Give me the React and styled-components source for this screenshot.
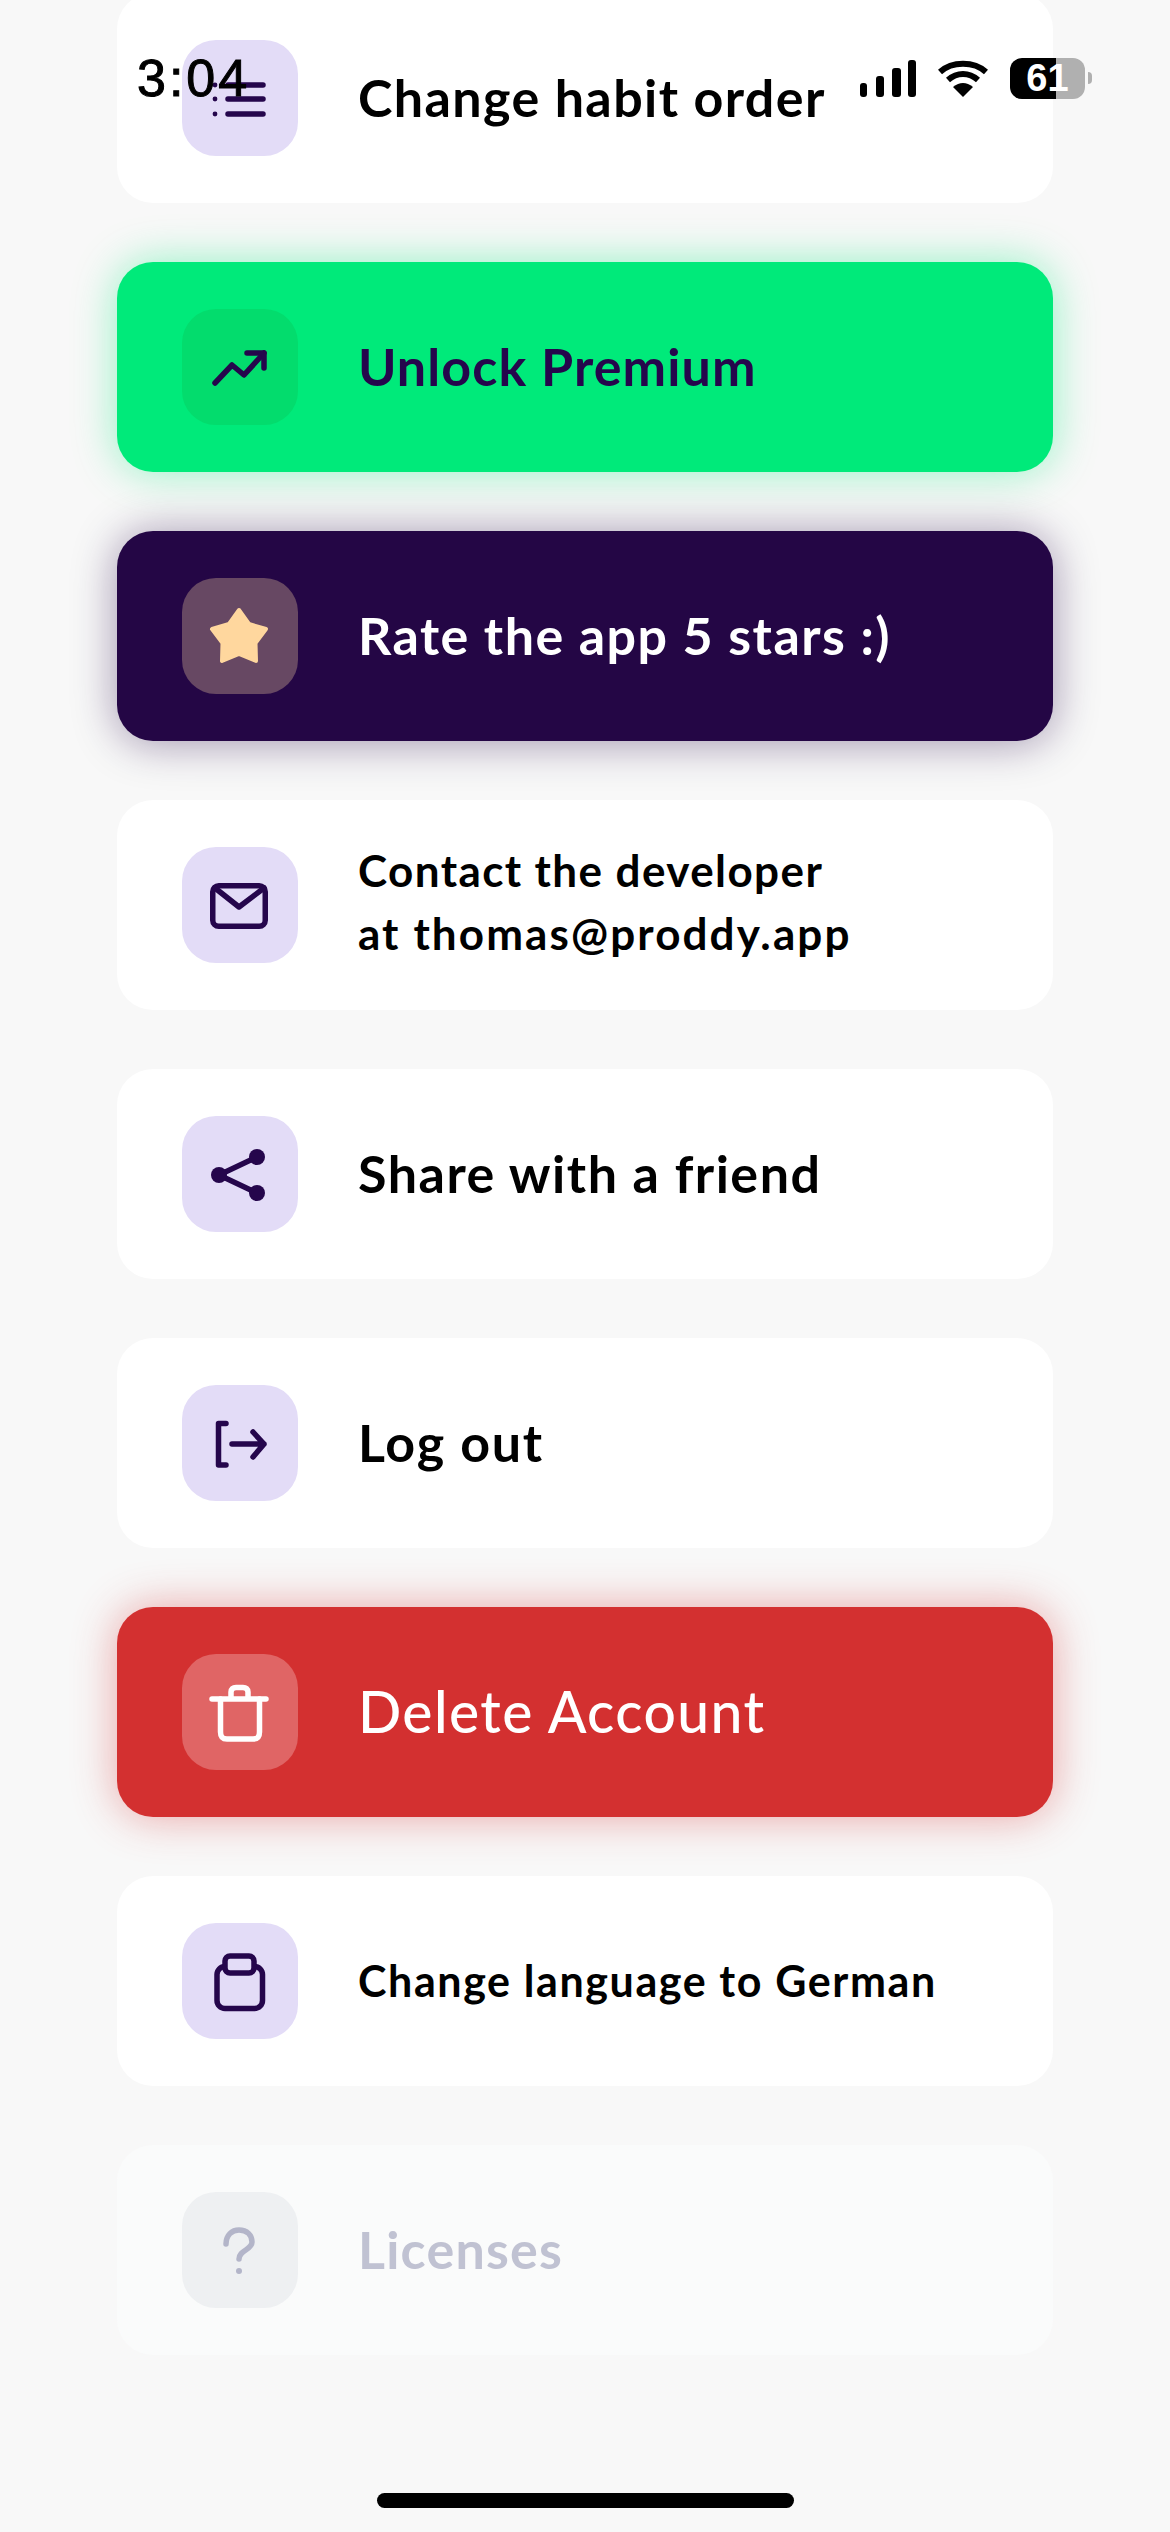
import React from 'react';
import styled, { createGlobalStyle } from 'styled-components';

const INK = '#25064c';

const GlobalStyle = createGlobalStyle`
  html, body {
    margin: 0;
    padding: 0;
    background: #f8f8f8;
  }
`;

const Screen = styled.div`
  position: relative;
  width: 1170px;
  height: 2532px;
  overflow: hidden;
  background: #f8f8f8;
  font-family: Lato, "Noto Sans", sans-serif;
`;

const List = styled.div`
  display: flex;
  flex-direction: column;
  gap: 59px;
  margin: -7px 117px 0;
`;

const variants = {
  plain: { bg: '#ffffff', text: '#000000', box: '#e3dcf7', shadow: 'none' },
  green: { bg: '#00ea7a', text: INK, box: '#03dc6d', shadow: '0 0 44px rgba(0, 234, 122, 0.42)' },
  dark: { bg: '#240645', text: '#ffffff', box: '#674863', shadow: '0 2px 44px rgba(36, 6, 69, 0.42)' },
  red: { bg: '#d33030', text: '#ffffff', box: '#e06565', shadow: '0 0 44px rgba(211, 48, 48, 0.42)' },
  muted: { bg: '#fafbfb', text: '#c0c2d2', box: '#eef0f2', shadow: 'none' },
};

const Card = styled.div`
  display: flex;
  align-items: center;
  gap: 60px;
  height: 210px;
  padding-left: 65px;
  border-radius: 36px;
  background: ${(p) => variants[p.$variant].bg};
  color: ${(p) => variants[p.$variant].text};
  box-shadow: ${(p) => variants[p.$variant].shadow};
`;

const IconBox = styled.div`
  flex: none;
  width: 116px;
  height: 116px;
  border-radius: 34px;
  background: ${(p) => variants[p.$variant].box};

  svg {
    display: block;
  }
`;

const Label = styled.div`
  font-size: ${(p) => p.$size || 52}px;
  font-weight: ${(p) => p.$weight || 700};
  line-height: 63px;
  letter-spacing: ${(p) => p.$spacing || 1.3}px;
  margin-bottom: ${(p) => p.$lift || 2}px;
`;

const LabelLine = styled.div`
  letter-spacing: ${(p) => p.$spacing}px;
`;

const StatusBar = styled.div`
  position: absolute;
  top: 53px;
  left: 137px;
  width: 955px;
  display: flex;
  align-items: center;
  color: #000;
  font-family: "Liberation Sans", Arial, sans-serif;
`;

const Time = styled.div`
  font-size: 52px;
  line-height: 50px;
  letter-spacing: 3px;
  margin-right: auto;
  -webkit-text-stroke: 1px #000;
`;

const StatusIcons = styled.div`
  display: flex;
  align-items: center;
  gap: 22px;
`;

const BatteryWrap = styled.div`
  display: flex;
  align-items: center;
  gap: 3px;
`;

const Battery = styled.div`
  width: 75px;
  height: 41px;
  border-radius: 12px;
  background: linear-gradient(90deg, #000 ${(p) => p.$level}%, #b0b0b0 ${(p) => p.$level}%);
  color: #fff;
  font-size: 38px;
  font-weight: 700;
  line-height: 41px;
  text-align: center;
`;

const BatteryNub = styled.div`
  width: 4px;
  height: 12px;
  border-radius: 0 4px 4px 0;
  background: #b0b0b0;
`;

const HomeIndicator = styled.div`
  position: absolute;
  left: 377px;
  bottom: 24px;
  width: 417px;
  height: 15px;
  border-radius: 8px;
  background: #000;
`;

const Glyph = ({ color = INK, children }) => (
  <svg width="116" height="116" viewBox="0 0 116 116" fill="none" stroke={color} strokeWidth="5.500" strokeLinecap="round" strokeLinejoin="round">
    {children}
  </svg>
);

const OrderIcon = () => (
  <Glyph>
    <path d="M46 45H81M46 59H81M46 74H81" />
    <circle cx="33" cy="45" r="2.400" fill={INK} stroke="none" />
    <circle cx="33" cy="59" r="2.400" fill={INK} stroke="none" />
    <circle cx="33" cy="74" r="2.400" fill={INK} stroke="none" />
  </Glyph>
);

const TrendIcon = () => (
  <Glyph>
    <path d="M33 74L50 56L62 66L82 44" />
    <path d="M65 44H82V59" />
  </Glyph>
);

const StarIcon = () => (
  <Glyph color="#ffd79e">
    <path d="M57 32L67 46L84 51L73.500 65L74 83L57 76L40 83L40.500 65L30 51L47 46Z" fill="#ffd79e" strokeWidth="4" />
  </Glyph>
);

const MailIcon = () => (
  <Glyph>
    <rect x="30.750" y="38.750" width="52.500" height="40.500" rx="6" />
    <path d="M33 41L57 60L82 41" />
  </Glyph>
);

const ShareIcon = () => (
  <Glyph>
    <path d="M75 41L37 59L75 77" />
    <circle cx="75" cy="41" r="8" fill={INK} stroke="none" />
    <circle cx="37" cy="59" r="8" fill={INK} stroke="none" />
    <circle cx="75" cy="77" r="8" fill={INK} stroke="none" />
  </Glyph>
);

const LogoutIcon = () => (
  <Glyph>
    <path d="M44 38.500H36.500V80H44" />
    <path d="M50 59H82M71 47L82 59L71 72" />
  </Glyph>
);

const TrashIcon = () => (
  <Glyph color="#ffffff">
    <path d="M30 45H84" />
    <path d="M38.500 45V78C38.500 83 40.500 85 45 85H71C75.500 85 77.500 83 77.500 78V45" />
    <path d="M49 44V38C49 35 51 33.500 54 33.500H61C64 33.500 66 35 66 38V44" />
  </Glyph>
);

const ClipboardIcon = () => (
  <Glyph>
    <rect x="35" y="43.500" width="45.500" height="42" rx="8" />
    <rect x="43" y="33" width="29" height="17" rx="5" fill="#e3dcf7" />
  </Glyph>
);

const HelpIcon = () => (
  <Glyph color="#b3b5c9">
    <path d="M44 52C44 43 50 38 57 38C65 38 70 43 70 50C70 58 57 58 57 67" />
    <circle cx="57" cy="79" r="3" fill="#b3b5c9" stroke="none" />
  </Glyph>
);

const rows = [
  { variant: 'plain', icon: <OrderIcon />, label: 'Change habit order', spacing: 1.4 },
  { variant: 'green', icon: <TrendIcon />, label: 'Unlock Premium', spacing: 1.1 },
  { variant: 'dark', icon: <StarIcon />, label: 'Rate the app 5 stars :)', spacing: 1.45 },
  {
    variant: 'plain',
    icon: <MailIcon />,
    lines: [
      { text: 'Contact the developer', spacing: 1.4 },
      { text: 'at thomas@proddy.app', spacing: 2.1 },
    ],
    size: 44,
    lift: 6,
  },
  { variant: 'plain', icon: <ShareIcon />, label: 'Share with a friend', spacing: 1.5 },
  { variant: 'plain', icon: <LogoutIcon />, label: 'Log out', spacing: 1.7 },
  { variant: 'red', icon: <TrashIcon />, label: 'Delete Account', size: 57, weight: 500, spacing: 1.4 },
  { variant: 'plain', icon: <ClipboardIcon />, label: 'Change language to German', size: 43, spacing: 1.6 },
  { variant: 'muted', icon: <HelpIcon />, label: 'Licenses', spacing: 1.2 },
];

const App = () => (
  <Screen>
    <GlobalStyle />
    <List>
      {rows.map((row) => (
        <Card key={row.label || row.lines[0].text} $variant={row.variant}>
          <IconBox $variant={row.variant}>{row.icon}</IconBox>
          <Label $size={row.size} $weight={row.weight} $spacing={row.spacing} $lift={row.lift}>
            {row.lines
              ? row.lines.map((line) => <LabelLine key={line.text} $spacing={line.spacing}>{line.text}</LabelLine>)
              : row.label}
          </Label>
        </Card>
      ))}
    </List>
    <StatusBar>
      <Time>3:04</Time>
      <StatusIcons>
        <svg width="56" height="37" viewBox="0 0 56 37" fill="#000">
          <rect x="0" y="23" width="7" height="14" rx="3" />
          <rect x="16" y="16" width="8" height="21" rx="3" />
          <rect x="32" y="8" width="9" height="29" rx="3" />
          <rect x="48" y="0" width="8" height="37" rx="3" />
        </svg>
        <svg width="50" height="37" viewBox="0 0 50 37" fill="none" stroke="#000" strokeWidth="6">
          <path d="M2 12C14 1 36 1 48 12" />
          <path d="M10 20C19 12 31 12 40 20" />
          <path d="M15 27Q25 19 35 27L25 37Z" fill="#000" stroke="none" />
        </svg>
        <BatteryWrap>
          <Battery $level={61}>61</Battery>
          <BatteryNub />
        </BatteryWrap>
      </StatusIcons>
    </StatusBar>
    <HomeIndicator />
  </Screen>
);

export default App;
